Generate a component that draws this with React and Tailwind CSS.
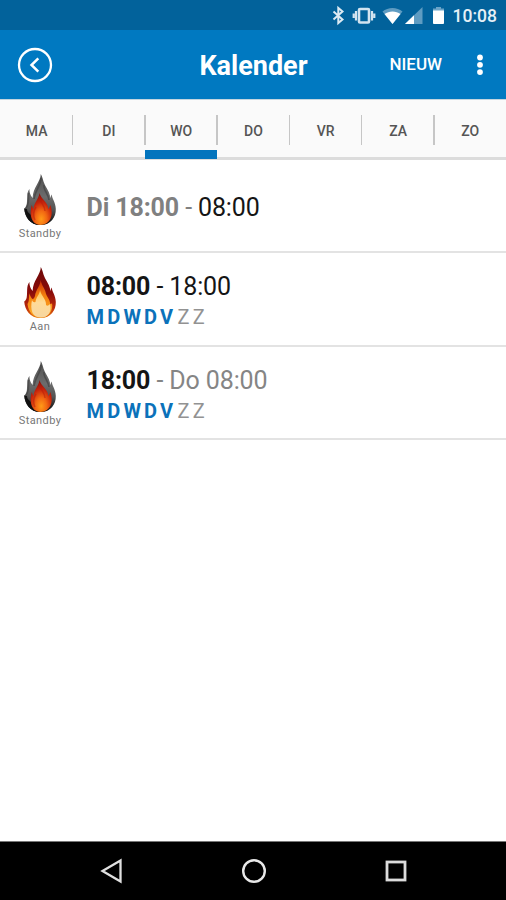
const days = ["MA", "DI", "WO", "DO", "VR", "ZA", "ZO"];

const outerFlame =
  "M17.8 1C17.6 9 10 14 9.6 25C7 22 6.4 19 6.4 16C3 20 4.8 27 3.6 32C3 34 2.2 35 1.2 35.4C2 44 7 52 17.5 52C28 52 33 44 32.8 36C32.6 29 29 26 28.8 21.5C28 22.5 27.8 24 27.4 25C26.8 19 23.5 15.5 21.5 11C20 7.500 19.500 4 17.800 1Z";

const StatusIcons = () => (
  <svg className="w-[124px] h-[30px]" viewBox="326 0 124 30">
    {/* Bluetooth */}
    <path d="M333.500 11.500L342.500 19.500L338.300 23V8L342.500 11.500L333.500 19.500" fill="none" stroke="#dceaf3" strokeWidth="2" />
    {/* Vibrate */}
    <rect x="359" y="9" width="10" height="13.500" rx="1" fill="none" stroke="#d3e4f0" strokeWidth="2.600" />
    <path d="M356 11V20.500M372 11V20.500M353.700 13.500V18M374.300 13.500V18" stroke="#d3e4f0" strokeWidth="2.200" />
    {/* Wifi */}
    <path d="M382.500 11.500C388 6.800 397 6.800 402.500 11.500L392.500 24Z" fill="#5f9cc2" />
    <path d="M384.500 14C389 10.500 396 10.500 400.500 14L392.500 24Z" fill="#fff" />
    {/* Signal */}
    <path d="M405 24L422.500 7V24Z" fill="#5f9cc2" />
    <path d="M405 24L414 15.300V24Z" fill="#fff" />
    {/* Battery */}
    <path d="M433 8.500H436V7H441V8.500H444V11H433Z" fill="#6ba4c8" />
    <path d="M433 10.500H444V23.200Q444 24 443 24H434Q433 24 433 23.200Z" fill="#fff" />
  </svg>
);

const StandbyFlame = () => (
  <svg className="w-[34px] h-[53px]" viewBox="0 0 34 53">
    <defs>
      <linearGradient id="smoke" x1="0" y1="0" x2="0" y2="1">
        <stop offset="0" stopColor="#505050" />
        <stop offset="0.45" stopColor="#6c6c6c" />
        <stop offset="0.7" stopColor="#555" />
        <stop offset="1" stopColor="#080808" />
      </linearGradient>
      <radialGradient id="ember" cx="0.5" cy="0.82" r="0.75">
        <stop offset="0" stopColor="#ff9a18" />
        <stop offset="0.35" stopColor="#f26812" />
        <stop offset="0.7" stopColor="#c8240c" />
        <stop offset="1" stopColor="#8e1208" />
      </radialGradient>
    </defs>
    <path d={outerFlame} fill="url(#smoke)" />
    <path d="M18 5C18 13 12 17 11 26M21 12C20 17 25 20 26 27M5.500 20C6 26 6 31 3 35" fill="none" stroke="#424242" strokeWidth="1.600" opacity="0.7" />
    <path d="M1.200 35.400C2 44 7 52 17.500 52C12 50 10 47 8 42C6 40 4 39 4 36Z" fill="#111" />
    <path d="M16.500 20C16 26 11 29 10.500 36C9.500 34.500 9.200 33 8.800 32C6.500 39 7 51.500 17.500 52C27 51.500 31 43 27.500 32C27 33.500 26 35 25.300 36C25 29 18.500 27 16.500 20Z" fill="url(#ember)" />
    <path d="M16.500 23C16 29 22 32 22 38M13 34C10.500 38 10 43 12 47" fill="none" stroke="#b51b0b" strokeWidth="1.500" opacity="0.5" />
  </svg>
);

const BurningFlame = () => (
  <svg className="w-[34px] h-[53px]" viewBox="0 0 34 53">
    <defs>
      <linearGradient id="fire" x1="0" y1="0" x2="0" y2="1">
        <stop offset="0" stopColor="#6d0808" />
        <stop offset="0.5" stopColor="#8a0c0a" />
        <stop offset="0.8" stopColor="#bd2b0b" />
        <stop offset="1" stopColor="#e8780c" />
      </linearGradient>
      <linearGradient id="blaze" x1="0" y1="0" x2="0" y2="1">
        <stop offset="0" stopColor="#c92a08" />
        <stop offset="0.4" stopColor="#f27c0d" />
        <stop offset="1" stopColor="#ffb42c" />
      </linearGradient>
      <linearGradient id="glow" x1="0" y1="0" x2="0" y2="1">
        <stop offset="0" stopColor="#ffc245" />
        <stop offset="0.45" stopColor="#ffdb98" />
        <stop offset="1" stopColor="#f6d6a0" />
      </linearGradient>
    </defs>
    <path d={outerFlame} fill="url(#fire)" />
    <path d="M17.500 14C18 19 12.500 24 12 30C11 33 9.500 34 8.500 32C7.500 30 6.500 29 6.500 27C5.500 32 6.500 35 4.500 38C5.500 46 10 51.500 17.500 51.500C26 51.500 30.500 44 29 37C28.500 38 28 38 27.300 38C26.500 32 23.500 31 22.500 26C21.500 22 19 20 17.500 14Z" fill="url(#blaze)" />
    <path d="M17 24C16.500 29 13 31 12.500 36C10.500 37 9.500 35 9 34C7 43 9 51.500 17.500 51.500C26 51.500 29 45 27 38C25.500 40 24 40 23 39C23.500 33 18 30 17 24Z" fill="url(#glow)" />
  </svg>
);

const Weekdays = () => (
  <div className="mt-[3px] flex h-6 items-center text-[20px] leading-6">
    <span className="w-[91px] font-bold tracking-[3.200px] text-[#0b72ba]">MDWDV</span>
    <span className="tracking-[3.200px] text-[#929292]">ZZ</span>
  </div>
);

const Row = ({ on, children }) => (
  <div className="flex h-[93.300px] border-b-2 border-[#e3e3e3]">
    <div className="flex w-20 shrink-0 flex-col items-center pt-[13px]">
      {on ? <BurningFlame /> : <StandbyFlame />}
      <span className="mt-px text-[11px] leading-[14px] tracking-[0.400px] text-[#777]">
        {on ? "Aan" : "Standby"}
      </span>
    </div>
    <div className="flex flex-col justify-center pl-[6.500px] pt-[4px] text-[25px] leading-[30px] tracking-[-0.120px] text-[#151515]">
      {children}
    </div>
  </div>
);

const App = () => {
  return (
    <div className="flex h-[900px] w-[506px] flex-col overflow-hidden bg-white font-['Roboto',sans-serif]">
      {/* Status bar */}
      <div className="flex h-[30px] shrink-0 items-center justify-end bg-[#02629b] pr-[9px]">
        <StatusIcons />
        <span className="ml-[3px] mt-[2px] text-[17.500px] font-medium text-[#e6f0f6]">10:08</span>
      </div>

      {/* Header */}
      <div className="grid h-[69px] shrink-0 grid-cols-[1fr_auto_1fr] items-center bg-[#0079c1] text-white">
        <svg className="ml-[17px] w-9 h-9" viewBox="0 0 36 36" fill="none" stroke="white">
          <circle cx="18" cy="18" r="16" strokeWidth="2.300" />
          <path d="M21.300 11.300L14.500 18L21.300 24.700" strokeWidth="2.500" />
        </svg>
        <h1 className="ml-px mt-[3px] text-[27px] font-bold">Kalender</h1>
        <div className="flex items-center justify-end pr-[22px]">
          <span className="mt-px text-[17px] font-medium">NIEUW</span>
          <svg className="ml-[34px] w-[8px] h-[22px]" viewBox="0 0 8 22" fill="white">
            <circle cx="4" cy="3.500" r="2.900" />
            <circle cx="4" cy="10.800" r="2.900" />
            <circle cx="4" cy="18.100" r="2.900" />
          </svg>
        </div>
      </div>

      {/* Day tabs */}
      <div className="flex h-[61px] shrink-0 border-t border-b-[3px] border-t-[#c4d5df] border-b-[#dcdcdc] bg-[#fafafa]">
        {days.map((day, i) => (
          <div key={day} className="relative flex flex-1 items-center justify-center pt-[5px] pl-px text-[14px] font-medium text-[#555]">
            {day}
            {i < 6 && <span className="absolute right-[-1px] top-[15px] h-[30px] w-[1.500px] bg-[#c6c6c6]" />}
            {day === "WO" && <span className="absolute bottom-[-2px] left-0 h-[9px] w-full bg-[#0374bd]" />}
          </div>
        ))}
      </div>

      {/* Schedule */}
      <div className="flex-1">
        <Row>
          <div className="text-[#808080]">
            <b>Di 18:00</b> - <span className="text-[#151515]">08:00</span>
          </div>
        </Row>
        <Row on>
          <div><b>08:00</b> - 18:00</div>
          <Weekdays />
        </Row>
        <Row>
          <div><b>18:00</b> <span className="text-[#858585]">- Do 08:00</span></div>
          <Weekdays />
        </Row>
      </div>

      {/* Navigation bar */}
      <div className="flex h-[59px] shrink-0 items-center justify-between border-t border-[#777] bg-black pl-[99px] pr-[98px]">
        <svg className="w-6 h-7" viewBox="0 0 24 28" fill="none" stroke="#e0e0e0" strokeWidth="2.300">
          <path d="M3.500 14L21.500 3.500V24.500Z" />
        </svg>
        <svg className="w-7 h-7" viewBox="0 0 28 28" fill="none" stroke="#e8e8e8" strokeWidth="2.400">
          <circle cx="14" cy="14" r="10.800" />
        </svg>
        <svg className="w-6 h-6" viewBox="0 0 24 24" fill="none" stroke="#dcdcdc" strokeWidth="2.800">
          <rect x="3" y="3" width="18" height="18" />
        </svg>
      </div>
    </div>
  );
};

export default App;
